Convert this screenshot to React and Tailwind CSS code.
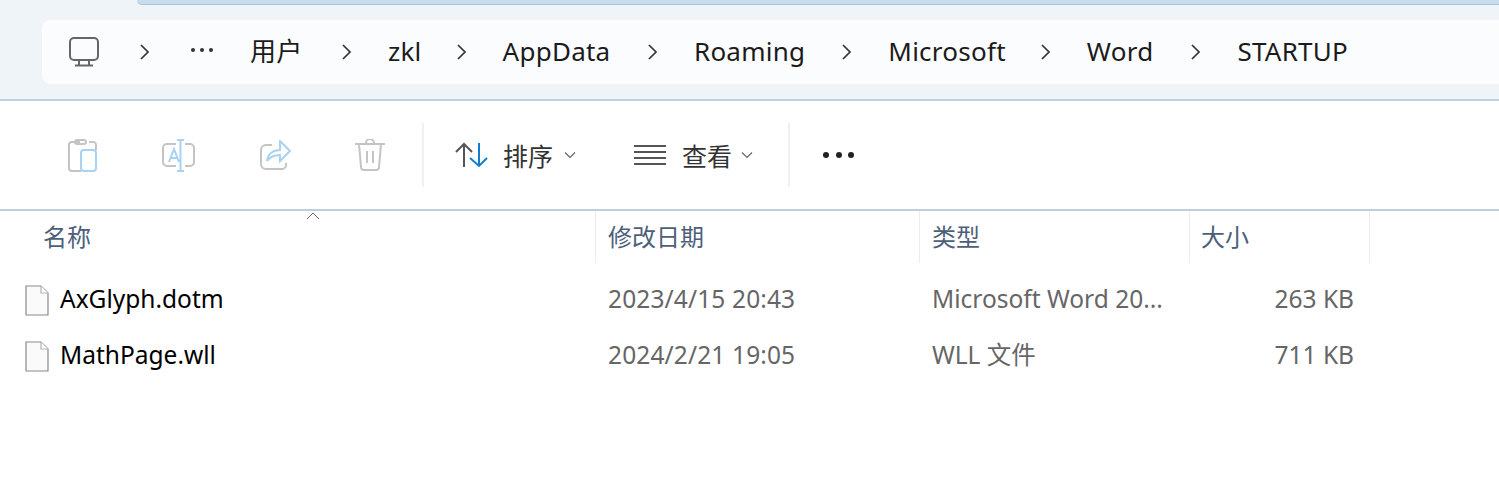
import React from "react";

const font = "font-['Noto_Sans','Noto_Sans_CJK_SC',sans-serif]";

const Chevron = () => (
  <svg width="12" height="18" viewBox="0 0 12 18" fill="none" stroke="#333" strokeWidth="1.7">
    <path d="M2 2l7 7-7 7" />
  </svg>
);

const Crumb = ({ label, gap, className }) => (
  <div className={`flex items-center ${className}`}>
    <span className="text-[26px] leading-none tracking-[0.25px] text-[#1b1b1b] -mt-[2px]">{label}</span>
    <span className={gap}>
      <Chevron />
    </span>
  </div>
);

const SmallChevron = () => (
  <svg width="12" height="8" viewBox="0 0 12 8" fill="none" stroke="#666" strokeWidth="1.2">
    <path d="M1 1.500l5 5 5-5" />
  </svg>
);

const PageIcon = () => (
  <svg width="24" height="31" viewBox="0 0 24 31" className="shrink-0">
    <path d="M1 1h15l7 7v22H1z" fill="#fafafa" stroke="#8a8a8a" strokeWidth="1.2" />
    <path d="M16 1v7h7" fill="#fff" stroke="#b5b5b5" strokeWidth="1.2" />
  </svg>
);

const Divider = () => <div className="w-[2px] h-[64px] bg-[#f0f0f0]" />;

const HeaderCell = ({ label, className }) => (
  <div className={`h-[52px] pt-[9px] border-r border-[#e9edf1] text-[24px] leading-[34px] text-[#4c607a] ${className}`}>
    {label}
  </div>
);

const FileRow = ({ name, date, type, size }) => (
  <div className="flex items-center h-[56px]">
    <div className="w-[596px] flex items-center pl-[25px] gap-[11px] text-[24.500px] text-black">
      <PageIcon />
      <span className="-mt-[2px]">{name}</span>
    </div>
    <div className="w-[324px] pl-[12px] text-[24.500px] tracking-[0.13px] text-[#666] -mt-[2px]">{date}</div>
    <div className="w-[270px] pl-[12px] text-[24.500px] text-[#666] -mt-[2px]">{type}</div>
    <div className="w-[180px] pr-[16px] text-right text-[24.500px] text-[#666] -mt-[2px]">{size}</div>
  </div>
);

export default function App() {
  return (
    <div className={`w-[1499px] h-[491px] overflow-hidden bg-white ${font}`}>
      {/* address bar */}
      <div className="h-[101px] bg-[#eff4f9] border-b-2 border-[#bdd0e0]">
        <div className="ml-[137px] h-[5px] bg-[#c9dcee] border-b border-[#a9c4dc] rounded-bl-[8px]" />
        <div className="ml-[42px] mt-[15px] h-[64px] bg-[#fbfcfe] rounded-l-[8px] flex items-center pl-[27px]">
          <svg width="30" height="30" viewBox="0 0 30 30" fill="none" stroke="#666" strokeWidth="2">
            <rect x="1" y="1" width="28" height="22" rx="4" />
            <path d="M10 23v5M20 23v5M6 28.500h18" />
          </svg>
          <span className="ml-[40px]">
            <Chevron />
          </span>
          <div className="ml-[40px] mr-[37px] flex gap-[5px] -mt-[4px]">
            <span className="w-[4px] h-[4px] rounded-full bg-[#333]" />
            <span className="w-[4px] h-[4px] rounded-full bg-[#333]" />
            <span className="w-[4px] h-[4px] rounded-full bg-[#333]" />
          </div>
          <Crumb label="用户" gap="ml-[38.500px]" />
          <Crumb label="zkl" gap="ml-[34px]" className="ml-[35px]" />
          <Crumb label="AppData" gap="ml-[36.500px]" className="ml-[35px]" />
          <Crumb label="Roaming" gap="ml-[36px]" className="ml-[35px]" />
          <Crumb label="Microsoft" gap="ml-[34px]" className="ml-[35px]" />
          <Crumb label="Word" gap="ml-[37px]" className="ml-[35px]" />
          <span className="ml-[35px] text-[26px] leading-none tracking-[0.25px] text-[#1b1b1b] -mt-[2px]">STARTUP</span>
        </div>
      </div>

      {/* toolbar */}
      <div className="h-[110px] border-b-2 border-[#bfcedb] flex items-center pl-[68px]">
        <svg width="30" height="33" viewBox="0 0 30 33" fill="none" strokeWidth="2">
          <path d="M12 3H4a3 3 0 0 0-3 3v23a3 3 0 0 0 3 3h9M21 3h4a3 3 0 0 1 3 2v6M9 1h7a2 2 0 0 1 2 2v0a2 2 0 0 1-2 2H9a2 2 0 0 1-2-2v0a2 2 0 0 1 2-2z" stroke="#c4c4c4" />
          <rect x="13" y="11" width="15" height="21" rx="3" stroke="#a8d2f2" />
        </svg>
        <svg className="ml-[64px]" width="33" height="33" viewBox="0 0 33 33" fill="none" strokeWidth="2">
          <path d="M14 5H5a4 4 0 0 0-4 4v14a4 4 0 0 0 4 4h9M23 5h5a4 4 0 0 1 4 4v14a4 4 0 0 1-4 4h-5" stroke="#c4c4c4" />
          <path d="M18.500 1v31M15 1h7M15 32h7M7 23l5-13 5 13M9 19h7" stroke="#a8d2f2" />
        </svg>
        <svg className="ml-[65px]" width="32" height="30" viewBox="0 0 32 30" fill="none" strokeWidth="2">
          <path d="M12 5H6a5 5 0 0 0-5 5v14a5 5 0 0 0 5 5h16a4 4 0 0 0 4-4v-2" stroke="#c4c4c4" />
          <path d="M20 1l10 10-10 10v-6c-6 0-10 2-13 6 1-7 6-11 13-11z" stroke="#a8d2f2" />
        </svg>
        <svg className="ml-[63px]" width="30" height="32" viewBox="0 0 30 32" fill="none" stroke="#c4c4c4" strokeWidth="2">
          <path d="M0 5h30M4 5l2 23a3 3 0 0 0 3 3h12a3 3 0 0 0 3-3l2-23M11 5V4a4 4 0 0 1 8 0v1M12 12v12M18 12v12" />
        </svg>
        <div className="ml-[37px]"><Divider /></div>
        <svg className="ml-[31px]" width="33" height="26" viewBox="0 0 33 26" fill="none" strokeWidth="2">
          <path d="M9 25V2M1 10l8-8 8 8" stroke="#555" />
          <path d="M24 1v23M15 16l9 8 8-8" stroke="#0f7dd4" />
        </svg>
        <span className="ml-[15px] mt-[2px] text-[25px] leading-none text-[#333]">排序</span>
        <span className="ml-[11px]"><SmallChevron /></span>
        <svg className="ml-[58px]" width="32" height="22" viewBox="0 0 32 22" stroke="#555" strokeWidth="2">
          <path d="M0 2h32M0 8h32M0 14h32M0 20h32" />
        </svg>
        <span className="ml-[16px] mt-[2px] text-[25px] leading-none text-[#333]">查看</span>
        <span className="ml-[9px]"><SmallChevron /></span>
        <div className="ml-[35px]"><Divider /></div>
        <div className="ml-[33px] flex gap-[6.500px]">
          <span className="w-[6px] h-[6px] rounded-full bg-[#222]" />
          <span className="w-[6px] h-[6px] rounded-full bg-[#222]" />
          <span className="w-[6px] h-[6px] rounded-full bg-[#222]" />
        </div>
      </div>

      {/* file list */}
      <div className="relative">
        <svg className="absolute left-[306px] top-[1px]" width="14" height="8" viewBox="0 0 14 8" fill="none" stroke="#666" strokeWidth="1">
          <path d="M1 7l6-6 6 6" />
        </svg>
        <div className="flex">
          <HeaderCell label="名称" className="w-[596px] pl-[43px]" />
          <HeaderCell label="修改日期" className="w-[324px] pl-[12px]" />
          <HeaderCell label="类型" className="w-[270px] pl-[12px]" />
          <HeaderCell label="大小" className="w-[180px] pl-[11px]" />
        </div>
        <div className="mt-[9px]">
          <FileRow name="AxGlyph.dotm" date="2023/4/15 20:43" type="Microsoft Word 20..." size="263 KB" />
          <FileRow name="MathPage.wll" date="2024/2/21 19:05" type="WLL 文件" size="711 KB" />
        </div>
      </div>
    </div>
  );
}
